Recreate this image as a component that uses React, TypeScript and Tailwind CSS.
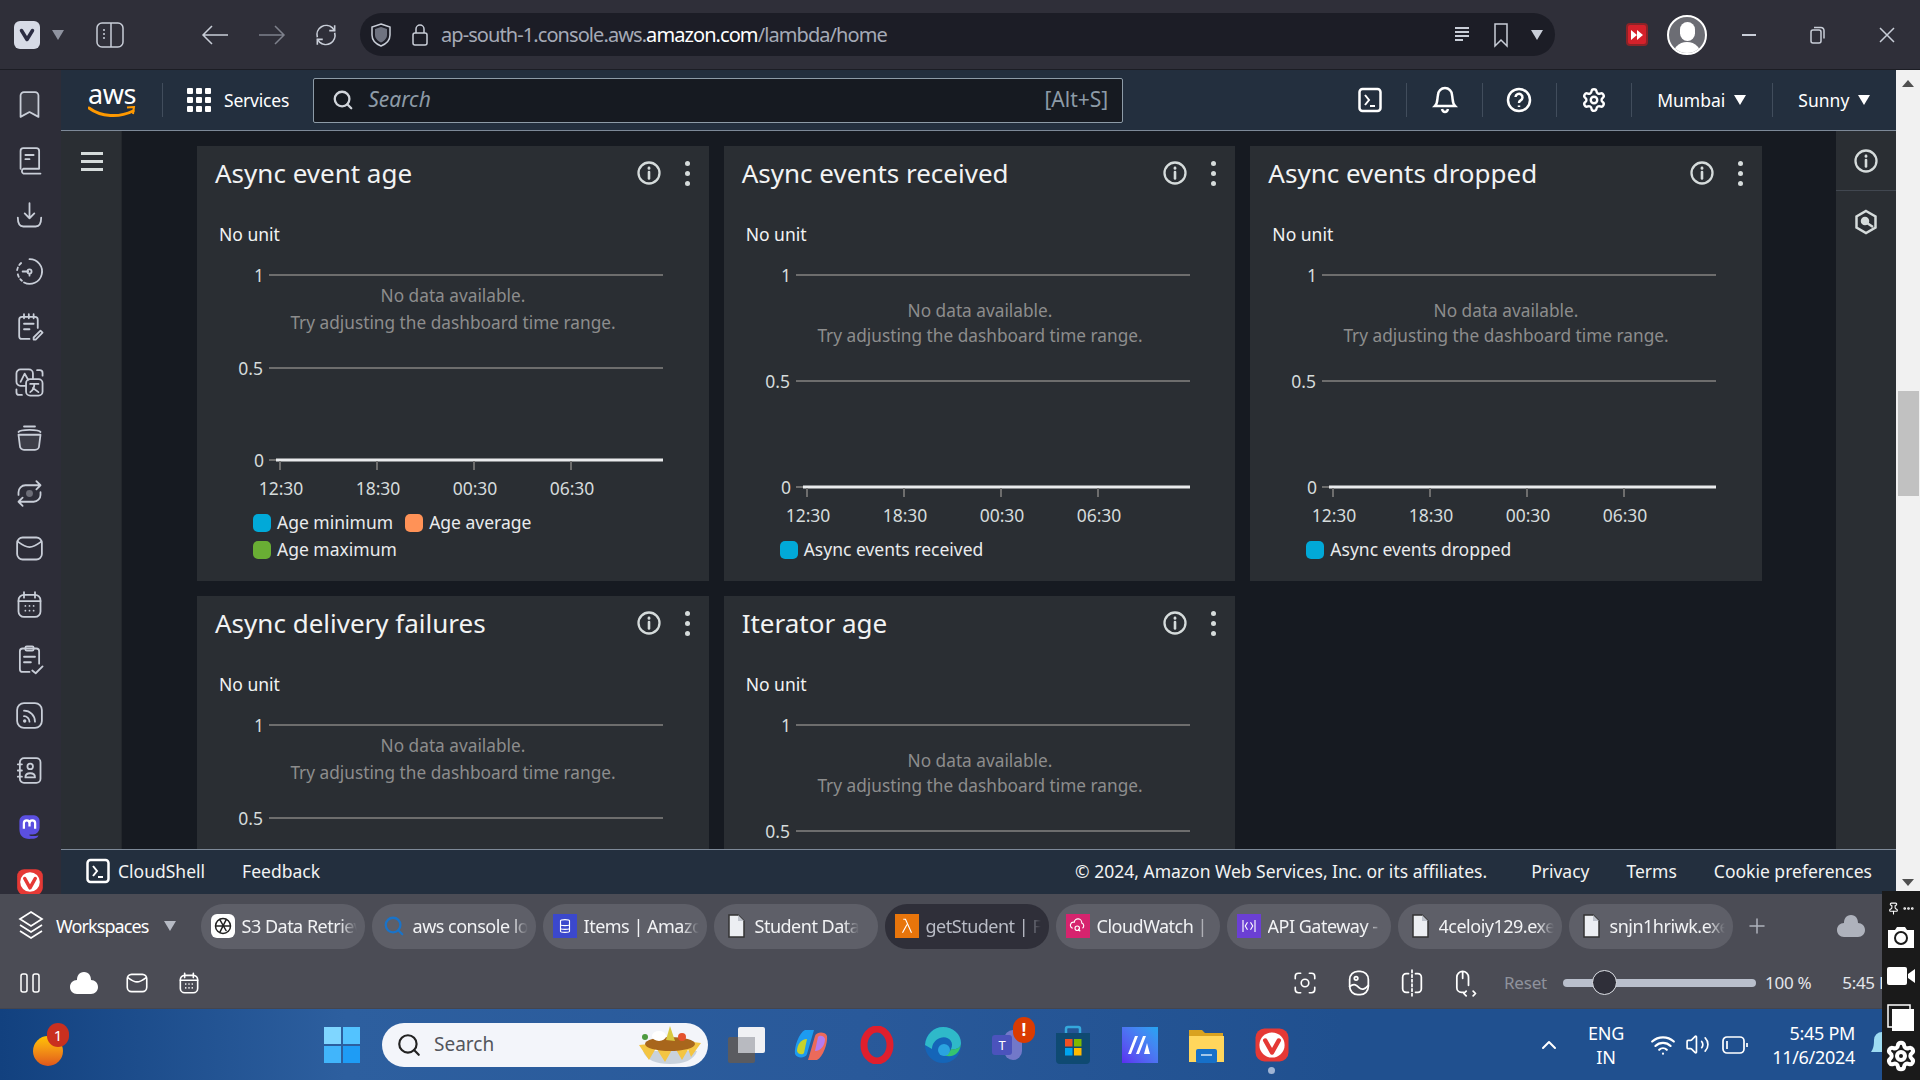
import React from 'react';
import { ChevronUp, Ellipsis, Pin, Plus, Search, Settings, Volume2, Wifi } from 'lucide-react';

const cards = [
  { title: 'Async event age', tall: false, legend: [['Age minimum', 'bg-[#01a9d8]'], ['Age average', 'bg-[#ff9257]'], ['Age maximum', 'bg-[#69ae34]']] },
  { title: 'Async events received', tall: true, legend: [['Async events received', 'bg-[#01a9d8]']] },
  { title: 'Async events dropped', tall: true, legend: [['Async events dropped', 'bg-[#01a9d8]']] },
  // second row runs under the footer, only the top half of these charts shows
  { title: 'Async delivery failures', tall: false, partial: true, legend: [] },
  { title: 'Iterator age', tall: true, partial: true, legend: [] },
];

const tabs = [
  { label: 'S3 Data Retrieval', icon: 'gpt' },
  { label: 'aws console login', icon: 'search' },
  { label: 'Items | Amazon DynamoDB', icon: 'dynamo' },
  { label: 'Student Data', icon: 'file' },
  { label: 'getStudent | Functions', icon: 'lambda', active: true },
  { label: 'CloudWatch | ap-south', icon: 'watch' },
  { label: 'API Gateway - ap-south', icon: 'api' },
  { label: '4celoiy129.exe', icon: 'file' },
  { label: 'snjn1hriwk.exe', icon: 'file' },
];

function Ico({ children, size = 24, className = 'text-[#c9ced8]', sw = 1.5 }: { children: React.ReactNode; size?: number; className?: string; sw?: number }) {
  return (
    <svg width={size} height={size} viewBox="0 0 24 24" fill="none" stroke="currentColor" strokeWidth={sw} strokeLinecap="round" strokeLinejoin="round" className={className}>
      {children}
    </svg>
  );
}

function VivaldiLogo({ size = 26 }: { size?: number }) {
  return (
    <svg width={size} height={size} viewBox="0 0 24 24">
      <rect x="1" y="1" width="22" height="22" rx="6" fill="#e53935" />
      <circle cx="12" cy="12" r="8.4" fill="#fff" />
      <path d="M7.500 9 L12 17 L16.500 9" fill="none" stroke="#e53935" strokeWidth="3" strokeLinecap="round" strokeLinejoin="round" />
    </svg>
  );
}

function Caret({ className = 'border-t-[#aeb3c0]' }: { className?: string }) {
  return <span className={`inline-block w-0 h-0 border-x-[6px] border-x-transparent border-t-[10px] ${className}`} />;
}

const railIcons: React.ReactNode[] = [
  <path key="a" d="M5.500 5.500A2.500 2.500 0 0 1 8 3h8a2.500 2.500 0 0 1 2.500 2.500V21L12 17.500 5.500 21z" fill="#3d3e48" />,
  <g key="b"><path d="M5.500 18V5a2 2 0 0 1 2-2h9.500a2 2 0 0 1 2 2v13H7.500a2 2 0 0 0 0 3.500H20" /><path d="M9 8h6M9 11h3" /></g>,
  <g key="c"><path d="M12 3v11M8.500 10.500l3.500 3.500 3.500-3.500" /><path d="M3.500 13.500c0 4 1.500 6.500 4 6.500h9c2.500 0 4-2.500 4-6.500" /></g>,
  <g key="d"><path d="M12 3a9 9 0 1 1-4 17" /><path d="M3.500 14c.5 2 1.500 3.500 3 4.700M3 11a9 9 0 0 1 4-6" strokeDasharray="2 2" /><circle cx="12" cy="12" r="1.500" /><path d="M7 12h4M12 13.500V15" /></g>,
  <g key="e"><path d="M12 21H6.500a2 2 0 0 1-2-2V7a2 2 0 0 1 2-2h9.500a2 2 0 0 1 2 2v6" /><path d="M8 3v3M11.500 3v3M15 3v3M8 10h7M8 14h4" /><path d="M15 20l5-5 1.500 1.500-5 5H15z" /></g>,
  <g key="f"><rect x="2.500" y="2.500" width="12" height="12" rx="3" /><rect x="9.500" y="9.500" width="12" height="12" rx="3" fill="#2d2d38" /><path d="M5.500 11.500l3-6 2.500 4.500M12.500 13h6M15.500 13c0 3-1.500 5-3 6M14.500 16l4 3" /><path d="M17.500 3h2a2 2 0 0 1 2 2v2M2.500 17v2a2 2 0 0 0 2 2h2" /></g>,
  <g key="g"><path d="M4 10h16l-1 8a3 3 0 0 1-3 3H8a3 3 0 0 1-3-3z" fill="#3d3e48" /><path d="M4 8c1-2 15-2 16 0M8 4h8" /></g>,
  <g key="h"><path d="M4 13V11a5 5 0 0 1 5-5h11M17 3l3 3-3 3" /><path d="M20 11v2a5 5 0 0 1-5 5H4M7 21l-3-3 3-3" /><circle cx="12" cy="12" r="2.500" fill="#6d6e78" stroke="none" /></g>,
  <g key="i"><rect x="3" y="4" width="18" height="16" rx="4" /><path d="M3.500 7c4 3 6 4 8.500 4s4.500-1 8.500-4" /></g>,
  <g key="j"><rect x="4" y="5" width="16" height="16" rx="4" /><path d="M8 3v4M16 3v4M4 9.500h16M9 13h.01M12 13h.01M15 13h.01M9 16.500h.01M12 16.500h.01M15 16.500h.01" /></g>,
  <g key="k"><path d="M12 21H7a2 2 0 0 1-2-2V6a2 2 0 0 1 2-2h10a2 2 0 0 1 2 2v9" /><rect x="9" y="2.500" width="6" height="3" rx="1" /><path d="M8 10h8M8 14h5M14 20l2.500 2 5-5" /></g>,
  <g key="l"><rect x="3" y="3" width="18" height="18" rx="5" /><path d="M8 8.500a8 8 0 0 1 8 8M8 12.500a4 4 0 0 1 4 4" /><circle cx="8.500" cy="16" r=".6" /></g>,
  <g key="m"><rect x="5" y="3" width="15" height="18" rx="3" /><path d="M3.500 7.500h3M3.500 12h3M3.500 16.500h3" /><circle cx="12.500" cy="9" r="2" /><path d="M9 17c0-2 1.500-3 3.500-3s3.500 1 3.500 3z" /></g>,
];

function LeftRail() {
  return (
    <div className="w-[61px] shrink-0 bg-[#2d2d38] pt-[7px] overflow-hidden flex flex-col items-center">
      {railIcons.map((icon, i) => (
        <div key={i} className="h-[55.500px] w-full shrink-0 flex items-center justify-center pr-[2px]">
          <Ico size={33} sw={1.300}>{icon}</Ico>
        </div>
      ))}
      <div className="h-[55.500px] shrink-0 flex items-center justify-center pr-[2px]">
        <svg width="27" height="27" viewBox="0 0 24 24">
          <path d="M8 2h8a5 5 0 0 1 5 5v6a6 6 0 0 1-6 6h-3c-1 1.500 3 2 8 1-1 3-5 3-8 3-6 0-9-3-9-9V7a5 5 0 0 1 5-5z" fill="#5b4fe0" />
          <path d="M7 14V9a2.500 2.500 0 0 1 5 0v3M12 12V9a2.500 2.500 0 0 1 5 0v5" stroke="#fff" strokeWidth="2" fill="none" />
        </svg>
      </div>
      <div className="h-[55.500px] shrink-0 flex items-center justify-center pr-[2px]">
        <VivaldiLogo size={28} />
      </div>
    </div>
  );
}

function TopBar() {
  return (
    <div className="h-[70px] shrink-0 bg-[#2f2f39] border-b border-[#1c1d24] flex items-center text-[#c9ced8]">
      <div className="w-[86px] pl-[14px] flex items-center gap-[12px]">
        <div className="w-[26px] h-[28px] rounded-[6px] bg-[#d7dbe6] flex items-center justify-center">
          <svg width="16" height="14" viewBox="0 0 16 14"><path d="M2.500 2.500 L8 11.500 L13.500 2.500" fill="none" stroke="#2b2d42" strokeWidth="3.500" strokeLinecap="round" strokeLinejoin="round" /></svg>
        </div>
        <Caret className="border-t-[#8f93a0]" />
      </div>
      <div className="ml-[10px]">
        <svg width="28" height="28" viewBox="0 0 28 28" fill="none" stroke="#c9ced8" strokeWidth="1.500"><rect x="1" y="2" width="26" height="24" rx="5" /><path d="M15 2v24" /><path d="M7 9h2M7 13h2M7 17h2" /></svg>
      </div>
      <div className="ml-[77px] flex items-center">
        <svg width="28" height="24" viewBox="0 0 28 24" fill="none" stroke="#c9ced8" strokeWidth="1.500"><path d="M27 12H2M11 3l-9 9 9 9" /></svg>
        <svg width="28" height="24" viewBox="0 0 28 24" fill="none" stroke="#7e818c" strokeWidth="1.500" className="ml-[29px]"><path d="M1 12h25M17 3l9 9-9 9" /></svg>
        <svg width="26" height="26" viewBox="0 0 24 24" fill="none" stroke="#c9ced8" strokeWidth="1.500" className="ml-[27px]"><path d="M4 14a8.500 8.500 0 0 1 14-8.500L20 8M20 10a8.500 8.500 0 0 1-14 8.500L4 16" /><path d="M20 3v5h-5M4 21v-5h5" /></svg>
      </div>
      <div className="ml-[21px] w-[1195px] h-[43px] rounded-full bg-[#1c1d26] flex items-center">
        <svg width="24" height="26" viewBox="0 0 24 26" className="ml-[9px]"><path d="M12 2l9 3v8c0 5-4 9-9 11-5-2-9-6-9-11V5z" fill="none" stroke="#c9ced8" strokeWidth="1.500" /><path d="M12 5l6 2v6c0 3.500-3 6-6 7.500C9 19 6 16.500 6 13V7z" fill="#6f7380" /></svg>
        <svg width="18" height="24" viewBox="0 0 18 24" fill="none" stroke="#c9ced8" strokeWidth="1.500" className="ml-[18px]"><rect x="2" y="10" width="14" height="12" rx="2" /><path d="M5 10V6a4 4 0 0 1 8 0v4" /></svg>
        <span className="ml-[12px] text-[20px] tracking-[-0.920px] text-[#a5aab6] whitespace-nowrap">
          ap-south-1.console.aws.<span className="text-white">amazon.com</span>/lambda/home
        </span>
        <div className="ml-auto flex items-center mr-[12px]">
          <svg width="18" height="20" viewBox="0 0 18 20" fill="none" stroke="#c9ced8" strokeWidth="2"><path d="M2 3h14M2 7h14M2 11h14M2 15h8" /></svg>
          <svg width="18" height="26" viewBox="0 0 18 26" fill="none" stroke="#c9ced8" strokeWidth="1.500" className="ml-[21px]"><path d="M3 2h12v22l-6-6-6 6z" /></svg>
          <span className="ml-[21px] flex"><Caret className="border-t-[#c9ced8]" /></span>
        </div>
      </div>
      <div className="ml-[71px] w-[22px] h-[23px] rounded-[4px] bg-[#d5212b] border-2 border-[#8c2327] flex items-center justify-center">
        <svg width="14" height="12" viewBox="0 0 14 12" fill="#fff"><path d="M1 1l6 5-6 5zM7 1l6 5-6 5z" /></svg>
      </div>
      <div className="ml-[19px] w-[40px] h-[40px] rounded-full bg-[#6c6d74] border-2 border-white overflow-hidden flex flex-col items-center">
        <div className="mt-[5px] w-[15px] h-[19px] rounded-full bg-white shrink-0" />
        <div className="mt-[1px] w-[30px] h-[20px] rounded-t-full bg-white shrink-0" />
      </div>
      <div className="ml-[35px] w-[14px] h-[2px] bg-[#c9ced8]" />
      <svg width="16" height="18" viewBox="0 0 16 18" fill="none" stroke="#c9ced8" strokeWidth="1.500" className="ml-[54px]"><rect x="1" y="4" width="10" height="13" rx="2" /><path d="M4 1.500h7a3 3 0 0 1 3 3v8" /></svg>
      <svg width="16" height="16" viewBox="0 0 16 16" fill="none" stroke="#c9ced8" strokeWidth="1.500" className="ml-[53px]"><path d="M1 1l14 14M15 1L1 15" /></svg>
    </div>
  );
}

function AwsHeader() {
  const divider = 'w-px h-[34px] bg-[#414d5c]';
  return (
    <div className="h-[61px] shrink-0 bg-[#232f3e] border-b border-[#7d8998] flex items-center text-white">
      <div className="ml-[28px] w-[46px] flex flex-col items-center leading-none">
        <span className="text-[27px] leading-[24px] tracking-[-0.500px] text-white">aws</span>
        <svg width="48" height="12" viewBox="0 0 48 12" fill="none"><path d="M1 2c12 9 30 10 44 3" stroke="#ff9900" strokeWidth="3" strokeLinecap="round" /><path d="M39 1.500l7-.5-1 7" stroke="#ff9900" strokeWidth="2" /></svg>
      </div>
      <div className={`ml-[27px] ${divider}`} />
      <div className="ml-[24px] grid grid-cols-3 gap-[3px]">
        {Array.from({ length: 9 }).map((_, i) => (
          <span key={i} className="w-[6px] h-[6px] rounded-[1px] bg-white" />
        ))}
      </div>
      <span className="ml-[13px] text-[17.500px] tracking-[-0.200px]">Services</span>
      <div className="ml-[24px] w-[810px] h-[45px] rounded-[2px] border border-[#8d9ba7] bg-[#161a21] flex items-center pl-[18px] pr-[14px]">
        <Search size={22} strokeWidth={2.500} className="text-[#d1d5db]" />
        <span className="ml-[14px] text-[21px] italic text-[#8d9ba7]">Search</span>
        <span className="ml-auto text-[21px] text-[#8d9ba7]">[Alt+S]</span>
      </div>
      <div className="ml-[235px] flex items-center">
        <svg width="24" height="26" viewBox="0 0 24 26" fill="none" stroke="#fff" strokeWidth="2.500"><rect x="1.500" y="2" width="21" height="22" rx="3" /><path d="M7 8l4 5-4 5M12 19h5" strokeWidth="2" /></svg>
        <div className={`ml-[24px] ${divider}`} />
        <svg width="26" height="28" viewBox="0 0 26 28" className="ml-[25px]" fill="none" stroke="#fff" strokeWidth="2.500"><path d="M3 20c3-3 2-7 3-11a7 7 0 0 1 14 0c1 4 0 8 3 11z" /><path d="M10 23c1 4 5 4 6 0" /><path d="M13 1v2" /></svg>
        <div className={`ml-[24px] ${divider}`} />
        <svg width="26" height="26" viewBox="0 0 26 26" className="ml-[23px]" fill="none" stroke="#fff" strokeWidth="2.500"><circle cx="13" cy="13" r="11" /><path d="M9.500 10a3.500 3.500 0 1 1 5 3.500c-1 .5-1.500 1-1.500 2.500" /><path d="M13 18.500v1.500" /></svg>
        <div className={`ml-[24px] ${divider}`} />
        <span className="ml-[24px] flex"><Settings size={26} strokeWidth={2.200} /></span>
        <div className={`ml-[24px] ${divider}`} />
        <span className="ml-[25px] text-[17.500px]">Mumbai</span>
        <span className="ml-[9px] flex"><Caret className="border-t-white" /></span>
        <div className={`ml-[26px] ${divider}`} />
        <span className="ml-[25px] text-[17.500px]">Sunny</span>
        <span className="ml-[9px] flex"><Caret className="border-t-white" /></span>
      </div>
    </div>
  );
}

function Chart({ tall, partial }: { tall: boolean; partial?: boolean }) {
  const top = 24;
  const mid = tall ? 130 : 117;
  const zero = tall ? 236 : 209;
  const msg = tall ? [59, 84] : [44, 71];
  const h = partial ? mid + 20 : tall ? 285 : 258;
  const labels = '#d5dbdb';
  return (
    <svg width="512" height={h} className="block shrink-0 text-[17.500px]">
      <line x1="72" x2="466" y1={top} y2={top} stroke="#6d6d6d" strokeWidth="2" />
      <line x1="72" x2="466" y1={mid} y2={mid} stroke="#6d6d6d" strokeWidth="2" />
      <text x="67" y={top} textAnchor="end" dominantBaseline="central" fill={labels}>1</text>
      <text x="66" y={mid} textAnchor="end" dominantBaseline="central" fill={labels}>0.5</text>
      {!partial && (
        <>
          <line x1="72" x2="80" y1={zero} y2={zero} stroke="#6d6d6d" strokeWidth="2" />
          <line x1="79" x2="466" y1={zero} y2={zero} stroke="#e9ebed" strokeWidth="3" />
          {[83, 180, 277, 374].map((x) => (
            <line key={x} x1={x} x2={x} y1={zero + 1} y2={zero + 10} stroke="#6d6d6d" strokeWidth="2" />
          ))}
          <text x="67" y={zero} textAnchor="end" dominantBaseline="central" fill={labels}>0</text>
          {[['12:30', 84], ['18:30', 181], ['00:30', 278], ['06:30', 375]].map(([t, x]) => (
            <text key={t} x={x} y={zero + 28} textAnchor="middle" dominantBaseline="central" fill={labels}>{t}</text>
          ))}
        </>
      )}
      <g className="text-[17.250px]">
        <text x="256" y={msg[0]} textAnchor="middle" dominantBaseline="central" fill="#8d8d8d">No data available.</text>
        <text x="256" y={msg[1]} textAnchor="middle" dominantBaseline="central" fill="#8d8d8d">Try adjusting the dashboard time range.</text>
      </g>
    </svg>
  );
}

function InfoIcon({ size = 24 }: { size?: number }) {
  return (
    <svg width={size} height={size} viewBox="0 0 24 24" fill="none" stroke="#d5dbdb" strokeWidth="2.300" strokeLinecap="round">
      <circle cx="12" cy="12" r="10.500" />
      <path d="M12 11v6.500" strokeWidth="2.600" />
      <path d="M12 7v.4" strokeWidth="2.800" />
    </svg>
  );
}

function Card({ card }: { card: (typeof cards)[number] }) {
  return (
    <div className={`bg-[#2a2e33] flex flex-col overflow-hidden ${card.partial ? 'h-[300px]' : 'h-[435px]'}`}>
      <div className="h-[54px] shrink-0 flex items-center pl-[18px]">
        <h2 className="text-[26px] text-[#f2f3f3] whitespace-nowrap">{card.title}</h2>
        <span className="ml-auto flex"><InfoIcon /></span>
        <span className="ml-[24px] mr-[19px] flex flex-col gap-[5px]">
          <span className="w-[5px] h-[5px] rounded-full bg-[#d5dbdb]" />
          <span className="w-[5px] h-[5px] rounded-full bg-[#d5dbdb]" />
          <span className="w-[5px] h-[5px] rounded-full bg-[#d5dbdb]" />
        </span>
      </div>
      <div className="h-[51px] shrink-0 pl-[22px] pt-[21px] text-[17.500px] leading-[26px] text-[#f2f3f3]">No unit</div>
      <Chart tall={card.tall} partial={card.partial} />
      <div className="w-[380px] ml-[56px] flex flex-wrap gap-x-[12px]">
        {card.legend.map(([name, color]) => (
          <div key={name} className="h-[27px] flex items-center gap-[6px] text-[17.500px] text-[#e9ebed] whitespace-nowrap">
            <span className={`w-[18px] h-[18px] rounded-[5px] ${color}`} />
            {name}
          </div>
        ))}
      </div>
    </div>
  );
}

function Scrollbar() {
  return (
    <div className="w-[24px] shrink-0 bg-[#f1f1f1] flex flex-col items-center justify-between relative">
      <div className="w-0 h-0 mt-[10px] border-x-[6px] border-x-transparent border-b-[7px] border-b-[#505050]" />
      <div className="absolute top-[321px] left-[2px] w-[21px] h-[105px] bg-[#c1c1c1]" />
      <div className="w-0 h-0 mb-[8px] border-x-[6px] border-x-transparent border-t-[7px] border-t-[#505050]" />
    </div>
  );
}

function Footer() {
  return (
    <div className="h-[45px] shrink-0 bg-[#232f3e] border-t border-[#7d8998] pb-[2px] flex items-center text-[17.500px] text-[#f2f3f3] whitespace-nowrap">
      <svg width="24" height="26" viewBox="0 0 24 26" fill="none" stroke="#fff" strokeWidth="2.500" className="ml-[25px]"><rect x="1.500" y="2" width="21" height="22" rx="3" /><path d="M7 8l4 5-4 5M12 19h5" strokeWidth="2" /></svg>
      <span className="ml-[8px]">CloudShell</span>
      <span className="ml-[37px]">Feedback</span>
      <span className="ml-auto">© 2024, Amazon Web Services, Inc. or its affiliates.</span>
      <span className="ml-[44px]">Privacy</span>
      <span className="ml-[37px]">Terms</span>
      <span className="ml-[37px] mr-[24px]">Cookie preferences</span>
    </div>
  );
}

function TabIcon({ kind }: { kind: string }) {
  if (kind === 'gpt') {
    return (
      <span className="w-[24px] h-[24px] rounded-[6px] bg-white flex items-center justify-center">
        <svg width="20" height="20" viewBox="0 0 24 24" fill="none" stroke="#222" strokeWidth="1.800"><circle cx="12" cy="12" r="9" /><path d="M8 4l8 14M16 4L8 20M3 12h18" /></svg>
      </span>
    );
  }
  if (kind === 'search') return <Search size={22} strokeWidth={2.500} className="text-[#1a73c8]" />;
  const fills: Record<string, string> = { dynamo: 'bg-[#3b48cc]', lambda: 'bg-[#e8750b]', watch: 'bg-[#d6246e]', api: 'bg-[#6b3fd4]' };
  if (kind === 'file') {
    return (
      <svg width="18" height="24" viewBox="0 0 18 24"><path d="M2 1h9l6 6v16H2z" fill="#eceef2" stroke="#333" strokeWidth="1.500" /><path d="M11 1v6h6" fill="#bfc3cc" /></svg>
    );
  }
  return (
    <span className={`w-[24px] h-[24px] flex items-center justify-center ${fills[kind]}`}>
      <svg width="18" height="18" viewBox="0 0 24 24" fill="none" stroke="#fff" strokeWidth="1.500">
        {kind === 'dynamo' && <path d="M6 5c0-2 12-2 12 0v14c0 2-12 2-12 0zM6 10c0 2 12 2 12 0M6 15c0 2 12 2 12 0" />}
        {kind === 'lambda' && <path d="M7 3h3l8 18M12 10l-6 11" />}
        {kind === 'watch' && <path d="M5 15a4 4 0 0 1 2-8 5 5 0 0 1 10 1 4 4 0 0 1 1 7M15 19l-3-3M14 15a3 3 0 1 1-6 0 3 3 0 0 1 6 0z" />}
        {kind === 'api' && <path d="M4 4v16M20 4v16M10 7l-3 5 3 5M14 7l3 5-3 5" />}
      </svg>
    </span>
  );
}

function TabBar() {
  return (
    <div className="h-[58px] shrink-0 bg-[#4b4c55] flex items-center pt-[6px] text-white">
      <svg width="28" height="32" viewBox="0 0 28 32" fill="none" stroke="#fff" strokeWidth="1.700" className="ml-[17px] shrink-0"><path d="M14 2l11 7-11 7L3 9z" /><path d="M3 15l11 7 11-7M3 21l11 7 11-7" /></svg>
      <span className="ml-[11px] text-[18px] tracking-[-0.900px]">Workspaces</span>
      <span className="ml-[15px] mr-[25px] flex"><Caret className="border-t-[#b6bac4]" /></span>
      <div className="flex gap-[7px]">
        {tabs.map((t) => (
          <div key={t.label} className={`w-[164px] h-[45px] shrink-0 rounded-[22px] pl-[9px] pr-[8px] flex items-center gap-[6px] ${t.active ? 'bg-[#2f2f39] text-[#b9bcc6]' : 'bg-[#5e5f68] text-[#f2f3f5]'}`}>
            <span className="w-[26px] shrink-0 flex justify-center"><TabIcon kind={t.icon} /></span>
            <span className="overflow-hidden whitespace-nowrap text-[18px] tracking-[-0.500px] [mask-image:linear-gradient(to_right,black_85%,transparent)]">{t.label}</span>
          </div>
        ))}
      </div>
      <span className="ml-[12px] flex"><Plus size={24} strokeWidth={1.500} className="text-[#aeb2bc]" /></span>
      <svg width="30" height="26" viewBox="0 0 30 26" fill="#aeb2bc" className="ml-[67px]"><path d="M15 2c5 0 7 4 7 8 4 0 7 3 7 7s-3 7-7 7H8c-4 0-7-3-7-7s3-7 7-7c0-4 2-8 7-8z" /></svg>
    </div>
  );
}

function StatusBar() {
  return (
    <div className="h-[57px] shrink-0 bg-[#4b4c55] pt-[6px] flex items-center text-[#c9ced8] border-b-[1px] border-[#44454e]">
      <svg width="22" height="20" viewBox="0 0 22 20" fill="none" stroke="#fff" strokeWidth="1.500" className="ml-[19px]"><rect x="2" y="1" width="6" height="18" rx="2" /><rect x="14" y="1" width="6" height="18" rx="2" /></svg>
      <svg width="30" height="26" viewBox="0 0 30 26" fill="#fff" className="ml-[28px]"><path d="M15 2c5 0 7 4 7 8 4 0 7 3 7 7s-3 7-7 7H8c-4 0-7-3-7-7s3-7 7-7c0-4 2-8 7-8z" /></svg>
      <span className="ml-[25px] flex"><Ico size={26} className="text-white"><rect x="3" y="4" width="18" height="16" rx="4" /><path d="M3.500 7c4 3 6 4 8.500 4s4.500-1 8.500-4" /></Ico></span>
      <span className="ml-[26px] flex"><Ico size={26} className="text-white"><rect x="4" y="5" width="16" height="16" rx="4" /><path d="M8 3v4M16 3v4M4 9.500h16M9 13h.01M12 13h.01M15 13h.01M9 16.500h.01M12 16.500h.01M15 16.500h.01" /></Ico></span>
      <span className="ml-[1090px] flex"><Ico size={26} className="text-white"><path d="M8 3H6a3 3 0 0 0-3 3v2M16 3h2a3 3 0 0 1 3 3v2M8 21H6a3 3 0 0 1-3-3v-2M16 21h2a3 3 0 0 0 3-3v-2" /><circle cx="12" cy="12" r="3.500" /></Ico></span>
      <span className="ml-[27px] flex"><Ico size={28} className="text-white"><rect x="4" y="2" width="16" height="20" rx="7" /><circle cx="9.500" cy="8" r="1.500" /><path d="M4 15c4-3 6-1 8 1s5 2 8-2" /></Ico></span>
      <span className="ml-[25px] flex"><Ico size={28} className="text-white"><path d="M12 1v22" strokeDasharray="2 2" /><path d="M9 4H7a3 3 0 0 0-3 3v10a3 3 0 0 0 3 3h2M15 4h2a3 3 0 0 1 3 3v10a3 3 0 0 1-3 3h-2" /></Ico></span>
      <span className="ml-[25px] flex"><Ico size={28} className="text-white"><path d="M11 20H9a4 4 0 0 1-4-4V7a5 5 0 0 1 10 0v7M10 2v6" /><path d="M13 19l-2 2 2 2M19 19l2 2-2 2" /></Ico></span>
      <span className="ml-[25px] text-[17px] text-[#8f929c] tracking-[-0.200px]">Reset</span>
      <div className="ml-[16px] w-[193px] h-[8px] rounded-full bg-[#b9bfcc] relative">
        <span className="absolute left-[29px] top-[-9px] w-[25px] h-[25px] rounded-full bg-[#2f2f39] border border-[#dfe2e8]" />
      </div>
      <span className="ml-[9px] text-[17px] text-[#e4e6eb] tracking-[-0.300px] whitespace-nowrap">100 %</span>
      <span className="ml-[31px] text-[17px] text-[#e4e6eb] tracking-[-0.300px] whitespace-nowrap">5:45 PM</span>
    </div>
  );
}

function Nachos() {
  return (
    <svg width="70" height="40" viewBox="0 0 70 40">
      <path d="M8 26h54c-3 9-13 13-27 13S11 35 8 26z" fill="#c9d2dc" />
      <path d="M4 20l10 15 10-17zM18 18l12 19 12-21zM36 16l11 19 11-19zM50 16l6 16 10-14z" fill="#f4c542" />
      <ellipse cx="35" cy="19" rx="25" ry="7" fill="#a8661c" />
      <ellipse cx="24" cy="11" rx="7" ry="5" fill="#fff" />
      <path d="M35 1l5 15-9-1z" fill="#d9c93f" />
      <circle cx="47" cy="12" r="4" fill="#e5532d" />
      <circle cx="10" cy="12" r="3" fill="#4c9a3f" />
    </svg>
  );
}

function Taskbar() {
  return (
    <div className="h-[71px] shrink-0 bg-[linear-gradient(90deg,#12417f_0%,#2d5f9f_18%,#29599a_45%,#20508f_70%,#20508f_100%)] flex items-center text-white whitespace-nowrap">
      <div className="ml-[32px] w-[36px] h-[46px] relative">
        <span className="absolute left-[1px] top-[14px] w-[30px] h-[30px] rounded-full bg-gradient-to-b from-[#ffc400] to-[#e0561a]" />
        <span className="absolute left-[15px] top-[1px] w-[22px] h-[24px] rounded-full bg-[#c9301f] text-[15px] leading-[24px] text-center">1</span>
      </div>
      <div className="ml-[256px] w-[36px] h-[36px] grid grid-cols-2 gap-[2px]">
        <span className="bg-[#7fd6ff]" />
        <span className="bg-[#53c3ff]" />
        <span className="bg-[#41b5fb]" />
        <span className="bg-[#1e9cf5]" />
      </div>
      <div className="ml-[22px] w-[326px] h-[44px] rounded-full bg-[#f3f5fa] flex items-center pl-[14px] pr-[3px] text-[#54565c]">
        <Search size={26} strokeWidth={2} className="text-[#222]" />
        <span className="ml-[12px] text-[19px]">Search</span>
        <span className="ml-auto flex"><Nachos /></span>
      </div>
      <div className="ml-[20px] w-[37px] h-[36px] relative">
        <span className="absolute left-0 top-[10px] w-[27px] h-[26px] rounded-[2px] bg-[#5a5b60]" />
        <span className="absolute left-[10px] top-0 w-[27px] h-[26px] rounded-[2px] bg-[#f0f1f4]" />
        <span className="absolute left-[10px] top-[10px] w-[17px] h-[16px] bg-[#b8bac0]" />
      </div>
      <svg width="36" height="36" viewBox="0 0 36 36" className="ml-[28px]">
        <path d="M12 3h9l-7 24c-1 4-10 5-12 0C1 20 6 6 12 3z" fill="#1d9bf0" />
        <path d="M24 33h-9l7-24c1-4 10-5 12 0 1 7-4 21-10 24z" fill="#ec6a5a" />
        <path d="M4 24c0-6 4-12 10-12l-3 14c-1 2-6 2-7-2z" fill="#c7d22c" />
        <path d="M32 12c0 6-4 12-10 12l3-14c1-2 6-2 7 2z" fill="#b57cf0" />
      </svg>
      <svg width="34" height="38" viewBox="0 0 34 38" className="ml-[31px]"><ellipse cx="17" cy="19" rx="13" ry="16" fill="none" stroke="#e01f2d" strokeWidth="7" /></svg>
      <svg width="38" height="38" viewBox="0 0 38 38" className="ml-[30px]">
        <circle cx="19" cy="19" r="18" fill="#1565b8" />
        <path d="M1 19C2 8 10 1 19 1c10 0 18 7 18 16 0 5-5 7-10 6 4-8-4-14-11-11-5 2-8 6-8 11z" fill="#2fb9c9" />
        <path d="M37 17c0 5-5 7-10 6-1 4-6 6-10 4 4 4 12 5 17-1 2-3 3-6 3-9z" fill="#35c46f" />
        <circle cx="20" cy="24" r="6" fill="#2aa3e0" />
      </svg>
      <div className="ml-[30px] w-[36px] h-[38px] relative">
        <span className="absolute left-[12px] top-[4px] w-[18px] h-[30px] rounded-full bg-[#7278c9]" />
        <span className="absolute left-0 top-[9px] w-[20px] h-[20px] rounded-[3px] bg-[#4b53bc] text-[13px] leading-[20px] text-center">T</span>
        <span className="absolute left-[21px] top-[-9px] w-[22px] h-[26px] rounded-full bg-[#da3b01] text-[17px] leading-[26px] text-center font-bold">!</span>
      </div>
      <svg width="36" height="40" viewBox="0 0 36 40" className="ml-[27px]">
        <path d="M11 8V4a2 2 0 0 1 2-2h10a2 2 0 0 1 2 2v4" fill="none" stroke="#35a8dc" strokeWidth="2.500" />
        <path d="M1 8h34v27a4 4 0 0 1-4 4H5a4 4 0 0 1-4-4z" fill="#0f4a72" />
        <rect x="10" y="14" width="7.500" height="7.500" fill="#f25022" /><rect x="19" y="14" width="7.500" height="7.500" fill="#7fba00" />
        <rect x="10" y="23" width="7.500" height="7.500" fill="#00a4ef" /><rect x="19" y="23" width="7.500" height="7.500" fill="#ffb900" />
      </svg>
      <div className="ml-[31px] w-[36px] h-[36px] bg-gradient-to-tr from-[#5b2bf0] to-[#22a6f2] flex items-center justify-center">
        <svg width="26" height="20" viewBox="0 0 26 20" fill="#fff"><path d="M8 1h3L4 19H1zM16 1h3l-7 18H9zM20 8l3 11h-6z" /></svg>
      </div>
      <svg width="36" height="36" viewBox="0 0 36 36" className="ml-[30px]">
        <path d="M1 3h13l3 3h18v27H1z" fill="#d9a21f" />
        <path d="M1 9h35v26H1z" fill="#ffd65c" />
        <rect x="8" y="22" width="21" height="14" rx="2" fill="#1670c9" />
        <rect x="13" y="27" width="11" height="2" fill="#fff" opacity=".6" />
      </svg>
      <div className="ml-[30px] relative flex">
        <VivaldiLogo size={36} />
        <span className="absolute left-[14px] top-[40px] w-[7px] h-[7px] rounded-full bg-[#9fb4d4]" />
      </div>
      <span className="ml-[247px] flex"><ChevronUp size={24} strokeWidth={2} /></span>
      <div className="ml-[25px] w-[40px] flex flex-col items-center text-[18px] leading-[24px] tracking-[-0.200px]">
        <span>ENG</span>
        <span>IN</span>
      </div>
      <span className="ml-[24px] flex"><Wifi size={26} strokeWidth={2} /></span>
      <span className="ml-[9px] flex"><Volume2 size={25} strokeWidth={1.600} /></span>
      <svg width="26" height="20" viewBox="0 0 26 20" fill="none" stroke="#fff" strokeWidth="1.700" className="ml-[12px]"><rect x="1" y="2" width="21" height="16" rx="4" /><path d="M25 8v4M5 6v8" /></svg>
      <div className="ml-[17px] w-[90px] flex flex-col items-end text-[18px] leading-[24px] tracking-[-0.300px]">
        <span>5:45 PM</span>
        <span>11/6/2024</span>
      </div>
      <svg width="26" height="30" viewBox="0 0 26 30" fill="#9fdcf2" className="ml-[14px] shrink-0"><path d="M13 2a8 8 0 0 1 8 8c0 6 1 9 3 12H2c2-3 3-6 3-12a8 8 0 0 1 8-8z" /></svg>
    </div>
  );
}

function Overlay() {
  return (
    <div className="absolute right-0 bottom-0 w-[38px] h-[189px] bg-[#1a1a1a] flex flex-col items-center text-white overflow-hidden">
      <div className="h-[24px] flex items-center gap-[2px] mt-[5px]">
        <Pin size={13} strokeWidth={2} />
        <Ellipsis size={13} strokeWidth={3} />
      </div>
      <svg width="30" height="26" viewBox="0 0 30 26" className="mt-[4px]"><path d="M2 6h7l2-3h8l2 3h7v18H2z" fill="#fff" /><circle cx="15" cy="14" r="6" fill="none" stroke="#1a1a1a" strokeWidth="2" /></svg>
      <svg width="30" height="24" viewBox="0 0 30 24" className="mt-[14px]"><rect x="1" y="3" width="20" height="18" rx="2" fill="#fff" /><path d="M22 10l7-5v14l-7-5z" fill="#fff" /></svg>
      <svg width="30" height="28" viewBox="0 0 30 28" className="mt-[15px]"><rect x="2" y="2" width="22" height="22" fill="none" stroke="#fff" strokeWidth="1.500" /><rect x="6" y="6" width="22" height="22" fill="#fff" /></svg>
      <span className="mt-[9px] flex"><Settings size={32} strokeWidth={3} fill="#1a1a1a" /></span>
    </div>
  );
}

export default function App() {
  return (
    <div className="relative h-screen w-screen overflow-hidden flex flex-col font-['Noto_Sans',sans-serif] bg-[#161a21]">
      <TopBar />
      <div className="flex-1 min-h-0 flex">
        <LeftRail />
        <div className="flex-1 min-w-0 flex flex-col">
          <AwsHeader />
          <div className="flex-1 min-h-0 flex">
            <div className="w-[61px] shrink-0 bg-[#2a2e33] pt-[21px] pl-[20px] border-r border-[#23272c]">
              <div className="w-[22px] flex flex-col gap-[5px]">
                <span className="h-[3px] bg-[#d5dbdb]" />
                <span className="h-[3px] bg-[#d5dbdb]" />
                <span className="h-[3px] bg-[#d5dbdb]" />
              </div>
            </div>
            <div className="flex-1 min-w-0 overflow-hidden pl-[75px] pt-[15px]">
              <div className="w-[1565px] grid grid-cols-3 gap-[15px]">
                {cards.map((c) => <Card key={c.title} card={c} />)}
              </div>
            </div>
            <div className="w-[60px] shrink-0 bg-[#2a2e33] flex flex-col items-center">
              <div className="h-[60px] w-full border-b border-[#414750] flex items-center justify-center"><InfoIcon /></div>
              <div className="mt-[18px] flex">
                <svg width="24" height="26" viewBox="0 0 24 26" fill="none" stroke="#d5dbdb" strokeWidth="2.500"><path d="M12 2l9.500 5.500v11L12 24l-9.500-5.500v-11z" /><circle cx="11" cy="12" r="3" fill="#d5dbdb" /><path d="M13 14l6 4" /></svg>
              </div>
            </div>
          </div>
          <Footer />
        </div>
        <Scrollbar />
      </div>
      <TabBar />
      <StatusBar />
      <Taskbar />
      <Overlay />
    </div>
  );
}
